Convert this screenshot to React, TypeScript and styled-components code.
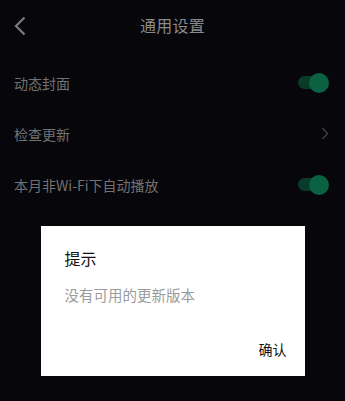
import React from 'react';
import styled, { createGlobalStyle } from 'styled-components';

const GlobalStyle = createGlobalStyle`
  html, body {
    margin: 0;
    padding: 0;
    background: #06060b;
  }
  body {
    font-family: "Noto Sans CJK SC", "Noto Sans", sans-serif;
  }
`;

const Page = styled.div`
  width: 345px;
  height: 401px;
  background: #06060b;
  position: relative;
  overflow: hidden;
`;

const Header = styled.header`
  height: 50px;
  display: flex;
  align-items: center;
  justify-content: center;
  position: relative;
`;

const BackButton = styled.button`
  position: absolute;
  left: 11px;
  top: 15px;
  width: 20px;
  height: 22px;
  padding: 0;
  border: none;
  background: none;
  display: flex;
  align-items: center;
  justify-content: center;
`;

const Title = styled.h1`
  margin: 0;
  font-size: 16px;
  font-weight: 400;
  color: #8a8a8a;
  letter-spacing: 0.3px;
`;

const List = styled.div`
  padding-top: 7px;
  display: flex;
  flex-direction: column;
`;

const Row = styled.div`
  height: 51px;
  padding: 0 16px 0 14px;
  display: flex;
  align-items: center;
  justify-content: space-between;
`;

const Label = styled.span`
  font-size: 14px;
  color: #727272;
`;

const Toggle = styled.div<{ on: boolean }>`
  width: 31px;
  height: 20px;
  position: relative;
  display: flex;
  align-items: center;

  &:before {
    content: '';
    position: absolute;
    left: 0;
    right: 4px;
    height: 13px;
    border-radius: 7px;
    background: ${p => (p.on ? '#0a3b29' : '#2a2a2a')};
  }

  &:after {
    content: '';
    position: absolute;
    ${p => (p.on ? 'right: 0;' : 'left: 0;')}
    width: 20px;
    height: 20px;
    border-radius: 50%;
    background: ${p => (p.on ? '#0b6242' : '#555')};
  }
`;

const Overlay = styled.div`
  position: absolute;
  inset: 0;
  display: flex;
  justify-content: center;
  align-items: flex-start;
  padding-top: 226px;
`;

const Dialog = styled.div`
  width: 264px;
  height: 150px;
  box-sizing: border-box;
  background: #fff;
  padding: 21px 18px 0 24px;
  display: flex;
  flex-direction: column;
`;

const DialogTitle = styled.div`
  font-size: 16px;
  line-height: 22px;
  color: #111;
`;

const DialogMessage = styled.div`
  margin-top: 16px;
  font-size: 14.5px;
  line-height: 20px;
  color: #9b9b9b;
`;

const DialogActions = styled.div`
  margin-top: 34px;
  display: flex;
  justify-content: flex-end;
`;

const ActionButton = styled.button`
  border: none;
  background: none;
  padding: 0;
  font-family: inherit;
  font-size: 14px;
  line-height: 20px;
  color: #111;
`;

const ChevronLeft = () => (
  <svg width="14" height="20" viewBox="0 0 14 20">
    <polyline points="10.5,1.5 2,10 10.5,18.5" fill="none" stroke="#7a7a7a" strokeWidth="2.2" />
  </svg>
);

const ChevronRight = () => (
  <svg width="8" height="13" viewBox="0 0 8 13">
    <polyline points="1.5,1 6.5,6.5 1.5,12" fill="none" stroke="#444" strokeWidth="1.3" />
  </svg>
);

const App: React.FC = () => {
  return (
    <Page>
      <GlobalStyle />
      <Header>
        <BackButton>
          <ChevronLeft />
        </BackButton>
        <Title>通用设置</Title>
      </Header>

      <List>
        <Row>
          <Label>动态封面</Label>
          <Toggle on={true} />
        </Row>
        <Row>
          <Label>检查更新</Label>
          <ChevronRight />
        </Row>
        <Row>
          <Label>本月非Wi-Fi下自动播放</Label>
          <Toggle on={true} />
        </Row>
      </List>

      <Overlay>
        <Dialog>
          <DialogTitle>提示</DialogTitle>
          <DialogMessage>没有可用的更新版本</DialogMessage>
          <DialogActions>
            <ActionButton>确认</ActionButton>
          </DialogActions>
        </Dialog>
      </Overlay>
    </Page>
  );
};

export default App;
